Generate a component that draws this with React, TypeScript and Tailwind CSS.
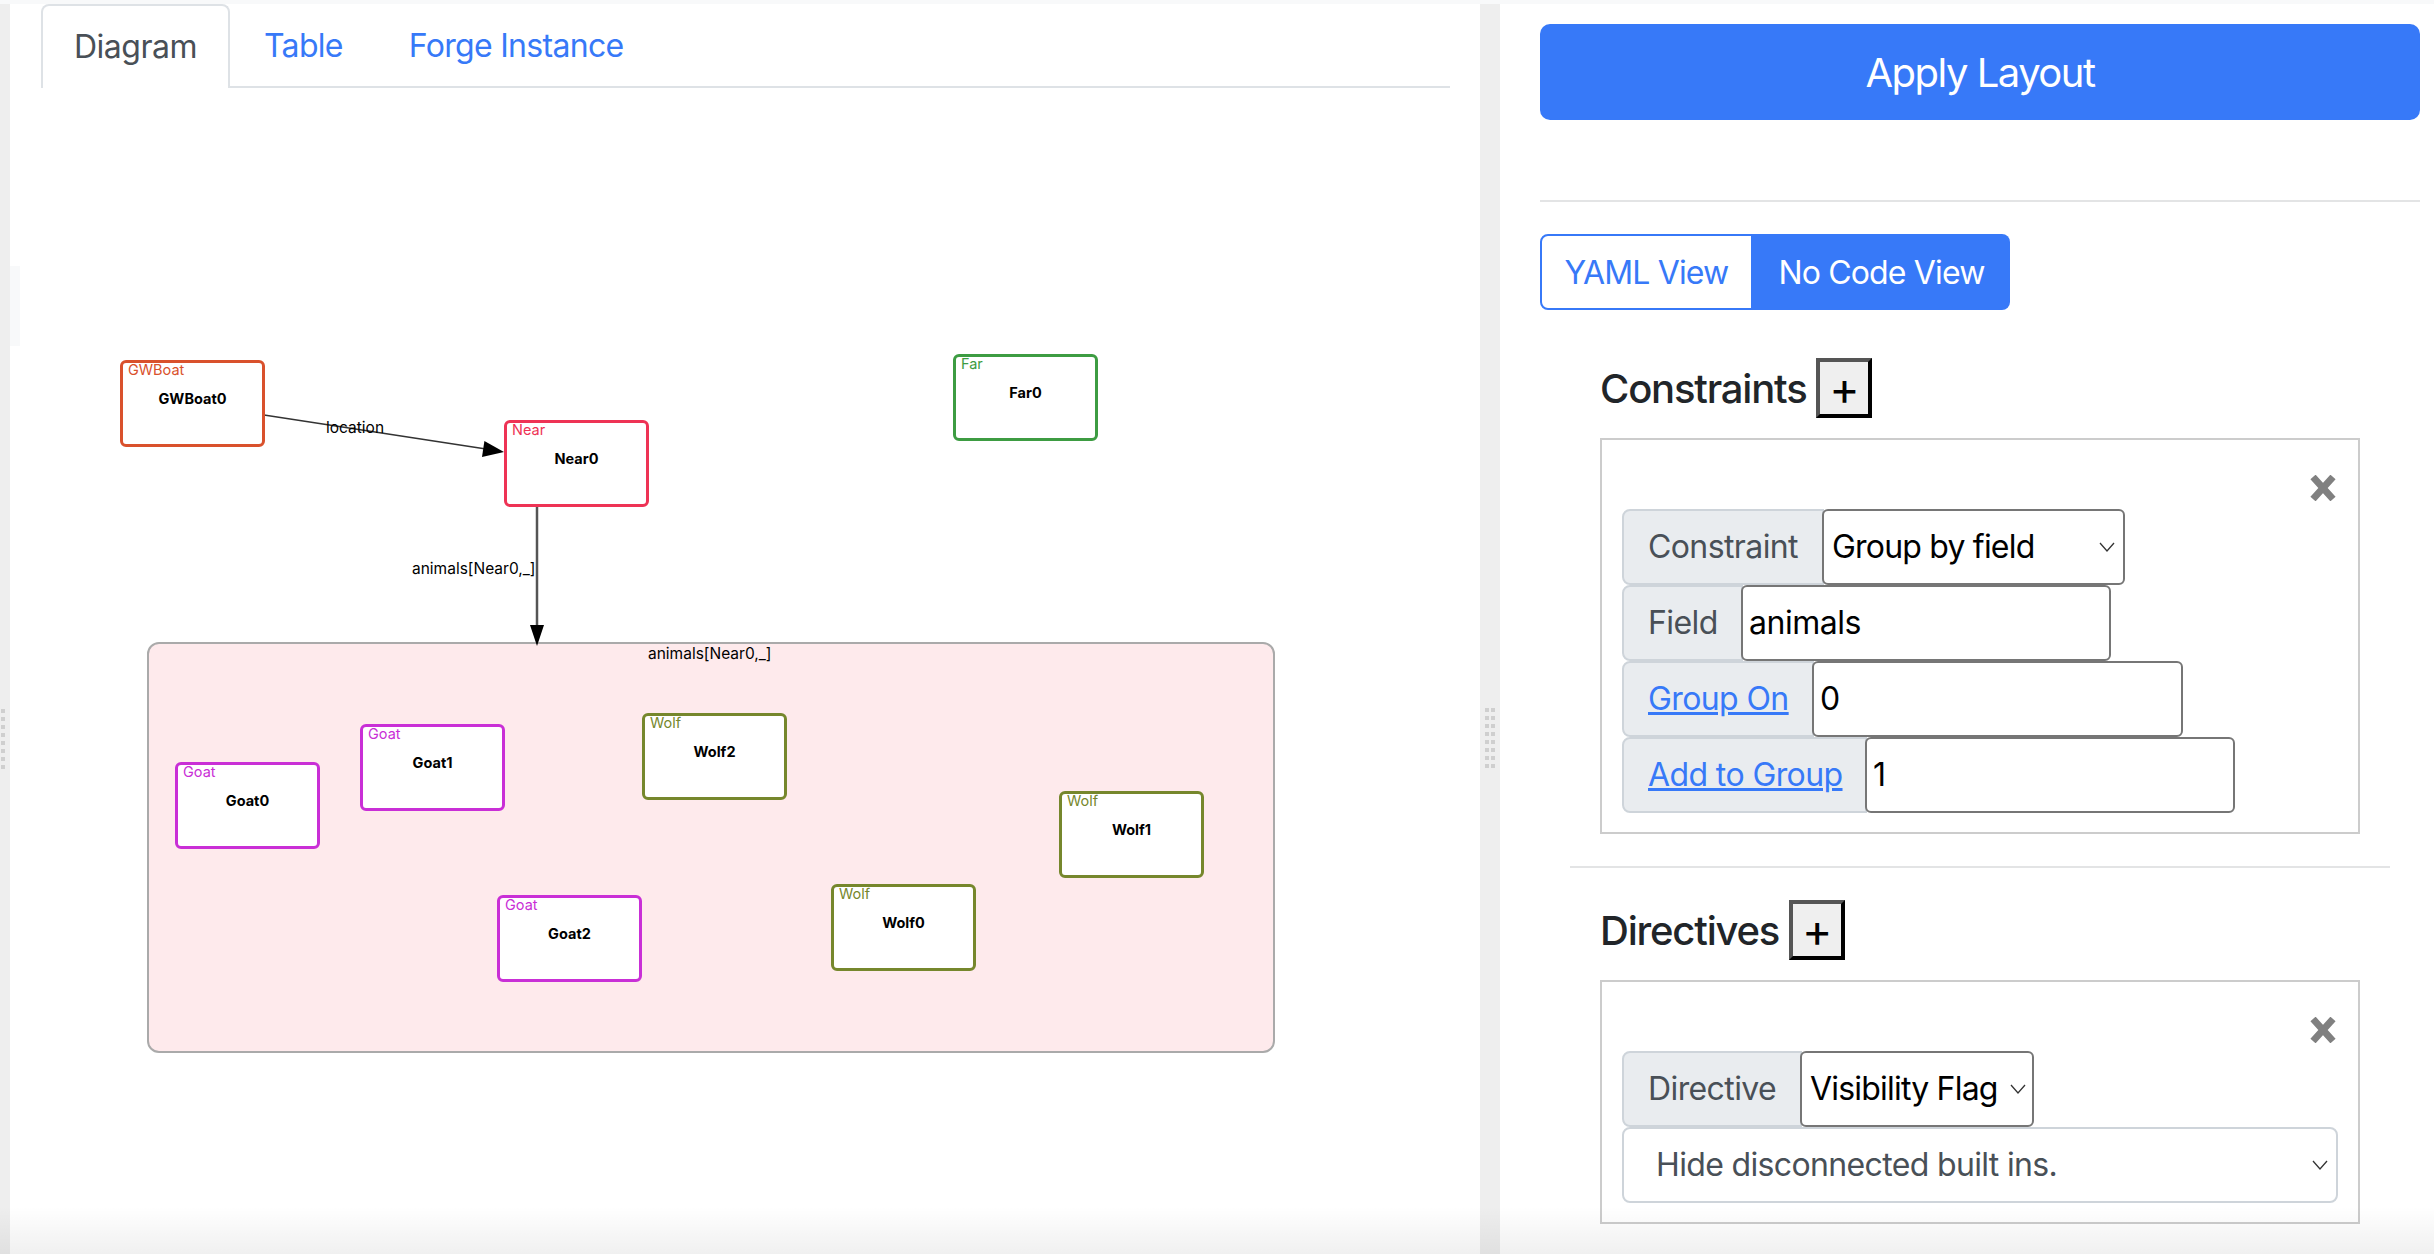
import React from "react";

const F = "font-['Inter','Noto_Sans',sans-serif]";

type NodeP = { type: string; name: string; x: number; y: number; border: string; text: string };

function GraphNode({ type, name, x, y, border, text }: NodeP) {
  return (
    <div
      className={`absolute w-[145px] h-[87px] bg-white border-[3px] rounded-[6px] ${border}`}
      style={{ left: x, top: y }}
    >
      <div className={`absolute left-[5px] top-[-2px] text-[14.5px] leading-[18px] ${text}`}>{type}</div>
      <div className="absolute inset-x-0 top-[27px] text-center text-[14.5px] leading-[18px] font-bold text-black">{name}</div>
    </div>
  );
}

function Dots() {
  return (
    <div className="grid grid-cols-2 gap-x-[2px] gap-y-[4px] w-[10px]">
      {Array.from({ length: 16 }).map((_, i) => (
        <div key={i} className="w-[4px] h-[4px] bg-[#cfcfcf]" />
      ))}
    </div>
  );
}

function Label({ children, className = "" }: { children: React.ReactNode; className?: string }) {
  return (
    <div className={`h-[76px] flex items-center px-[24px] bg-[#e9ecef] border-2 border-[#ced4da] rounded-l-[8px] text-[32px] tracking-[-0.6px] text-[#495057] whitespace-nowrap ${className}`}>
      {children}
    </div>
  );
}

function Chevron({ className = "" }: { className?: string }) {
  return (
    <svg className={className} width="16" height="12" viewBox="0 0 16 12" fill="none">
      <path d="M1 2 L8 10 L15 2" stroke="#333" strokeWidth="1.3" />
    </svg>
  );
}

function Field({ value, className }: { value: string; className: string }) {
  return (
    <div className={`h-[76px] flex items-center pl-[6px] bg-white border-2 border-[#767676] rounded-[6px] text-[32px] tracking-[-0.5px] text-black -ml-[2px] ${className}`}>
      {value}
    </div>
  );
}

function Sel({ value, className, pad }: { value: string; className: string; pad: string }) {
  return (
    <div className={`h-[76px] flex items-center justify-between bg-white border-2 border-[#767676] rounded-[6px] text-[32px] tracking-[-0.8px] text-black -ml-[2px] whitespace-nowrap ${pad} ${className}`}>
      <span>{value}</span>
      <Chevron />
    </div>
  );
}

function CloseX() {
  return (
    <div className="flex justify-end pr-[22px]">
      <svg width="26" height="26" viewBox="0 0 26 26">
        <path d="M3 2 L23 24 M23 2 L3 24" stroke="#808080" strokeWidth="7" />
      </svg>
    </div>
  );
}

function PlusBtn() {
  return (
    <button className="w-[56px] h-[60px] ml-[10px] bg-[#efefef] border-[4px] border-t-[#555555] border-l-[#555555] border-r-black border-b-black text-[46px] leading-none text-black flex items-center justify-center">
      +
    </button>
  );
}

export default function App() {
  return (
    <div className={`relative w-[2434px] h-[1254px] overflow-hidden bg-white flex flex-col ${F}`}>
      <div className="h-[4px] bg-[#f8f9fa] shrink-0" />
      <div className="flex flex-1 min-h-0">
        {/* left gutter */}
        <div className="relative w-[10px] bg-[#eeeeee] shrink-0 flex items-center">
          <div className="mt-[220px]">
            <div className="-ml-[5px]"><Dots /></div>
          </div>
          <div className="absolute left-[10px] top-[262px] w-[10px] h-[80px] bg-[#f8f9fa]" />
        </div>

        {/* left panel */}
        <div className="w-[1470px] shrink-0 pl-[31px] pr-[30px]">
          <div className="flex h-[84px] border-b-2 border-[#dee2e6] text-[32px] tracking-[-0.7px]">
            <div className="w-[189px] h-[84px] flex items-center justify-center bg-white border-2 border-b-0 border-[#dee2e6] rounded-t-[8px] text-[#495057] tracking-[-0.5px]">
              Diagram
            </div>
            <div className="h-[82px] pt-[2px] flex items-center pl-[34px] pr-[33px] text-[#3779f8]">Table</div>
            <div className="h-[82px] pt-[2px] flex items-center pl-[33px] text-[#3779f8]">Forge Instance</div>
          </div>

          {/* free canvas of the diagram; coordinates are page coordinates */}
          <div className="relative">
            <div className="absolute left-[-41px] top-[-88px] w-[1470px] h-[1250px]">
              <Canvas />
            </div>
          </div>
        </div>

        {/* middle gutter */}
        <div className="w-[20px] bg-[#eeeeee] shrink-0 flex items-center justify-center">
          <div className="mt-[218px]"><Dots /></div>
        </div>

        {/* right panel */}
        <div className="flex-1 min-w-0 pl-[40px] pr-[14px] pt-[20px]">
          <button className="w-full h-[96px] pt-[2px] bg-[#3779f8] text-white text-[40px] tracking-[-1.5px] rounded-[10px]">Apply Layout</button>
          <div className="h-[2px] bg-[#e3e4e5] mt-[80px]" />
          <div className="flex mt-[32px] h-[76px] w-[470px] text-[32px] tracking-[-0.85px]">
            <div className="w-[213px] pt-[2px] flex items-center justify-center bg-white border-2 border-[#3779f8] rounded-l-[8px] text-[#3779f8]">YAML View</div>
            <div className="flex-1 pt-[2px] flex items-center justify-center bg-[#3779f8] rounded-r-[8px] text-white">No Code View</div>
          </div>

          <div className="flex items-center mt-[48px] ml-[60px] h-[60px]">
            <h3 className="pt-[2px] text-[40px] font-medium tracking-[-1.2px] text-[#212529]">Constraints</h3>
            <PlusBtn />
          </div>

          <div className="ml-[60px] mr-[60px] mt-[20px] h-[396px] border-2 border-[#cccccc] pt-[35px] pl-[20px]">
            <CloseX />
            <div className="mt-[8px] flex flex-col">
              <div className="flex"><Label className="w-[202px]">Constraint</Label><Sel value="Group by field" className="w-[303px]" pad="pl-[8px] pr-[8px]" /></div>
              <div className="flex"><Label className="w-[121px]">Field</Label><Field value="animals" className="w-[370px]" /></div>
              <div className="flex"><Label className="w-[192px]"><a className="text-[#3779f8] underline">Group On</a></Label><Field value="0" className="w-[371px]" /></div>
              <div className="flex"><Label className="w-[245px]"><a className="text-[#3779f8] underline">Add to Group</a></Label><Field value="1" className="w-[370px]" /></div>
            </div>
          </div>

          <div className="h-[2px] bg-[#e3e4e5] mt-[32px] ml-[30px] mr-[30px]" />

          <div className="flex items-center mt-[32px] ml-[60px] h-[60px]">
            <h3 className="pt-[2px] text-[40px] font-medium tracking-[-1.2px] text-[#212529]">Directives</h3>
            <PlusBtn />
          </div>

          <div className="ml-[60px] mr-[60px] mt-[20px] h-[244px] border-2 border-[#cccccc] pt-[35px] pl-[20px] pr-[20px]">
            <div className="-mr-[20px]"><CloseX /></div>
            <div className="mt-[8px] flex flex-col">
              <div className="flex"><Label className="w-[180px]">Directive</Label><Sel value="Visibility Flag" className="w-[234px]" pad="pl-[8px] pr-[6px]" /></div>
              <div className="h-[76px] flex items-center justify-between pl-[32px] pr-[8px] bg-white border-2 border-[#ced4da] rounded-[8px] text-[32px] tracking-[-0.65px] text-[#495057]">
                <span>Hide disconnected built ins.</span>
                <Chevron />
              </div>
            </div>
          </div>
        </div>
      </div>
      {/* bottom fade of the window */}
      <div className="absolute inset-x-0 bottom-0 h-[48px] bg-gradient-to-b from-transparent to-[#0000000f] pointer-events-none" />
    </div>
  );
}

function Canvas() {
  return (
    <>
      <div className="absolute left-[147px] top-[642px] w-[1128px] h-[411px] bg-[#feeaec] border-2 border-[#aaaaaa] rounded-[12px]">
        <div className="absolute left-[499px] top-0 text-[15.5px] leading-[20px] text-black whitespace-nowrap">animals[Near0,_]</div>
      </div>

      <svg className="absolute left-0 top-0" width="1470" height="1250" viewBox="0 0 1470 1250">
        <line x1="264" y1="415" x2="486" y2="449" stroke="#333" strokeWidth="1.5" />
        <polygon points="504,452 482,457 484.4,441" fill="#000" />
        <line x1="537" y1="507" x2="537" y2="626" stroke="#555" strokeWidth="2.5" />
        <polygon points="537,646 530,625 544,625" fill="#000" />
      </svg>

      <div className="absolute left-[326px] top-[418px] text-[15.5px] leading-[20px] text-black">location</div>
      <div className="absolute left-[412px] top-[559px] text-[15.5px] leading-[20px] text-black whitespace-nowrap">animals[Near0,_]</div>

      <GraphNode type="GWBoat" name="GWBoat0" x={120} y={360} border="border-[#d9512c]" text="text-[#d9512c]" />
      <GraphNode type="Near" name="Near0" x={504} y={420} border="border-[#ee3355]" text="text-[#ee3355]" />
      <GraphNode type="Far" name="Far0" x={953} y={354} border="border-[#3d9c42]" text="text-[#3d9c42]" />
      <GraphNode type="Goat" name="Goat0" x={175} y={762} border="border-[#c92fd6]" text="text-[#c92fd6]" />
      <GraphNode type="Goat" name="Goat1" x={360} y={724} border="border-[#c92fd6]" text="text-[#c92fd6]" />
      <GraphNode type="Goat" name="Goat2" x={497} y={895} border="border-[#c92fd6]" text="text-[#c92fd6]" />
      <GraphNode type="Wolf" name="Wolf2" x={642} y={713} border="border-[#76872c]" text="text-[#76872c]" />
      <GraphNode type="Wolf" name="Wolf1" x={1059} y={791} border="border-[#76872c]" text="text-[#76872c]" />
      <GraphNode type="Wolf" name="Wolf0" x={831} y={884} border="border-[#76872c]" text="text-[#76872c]" />
    </>
  );
}
